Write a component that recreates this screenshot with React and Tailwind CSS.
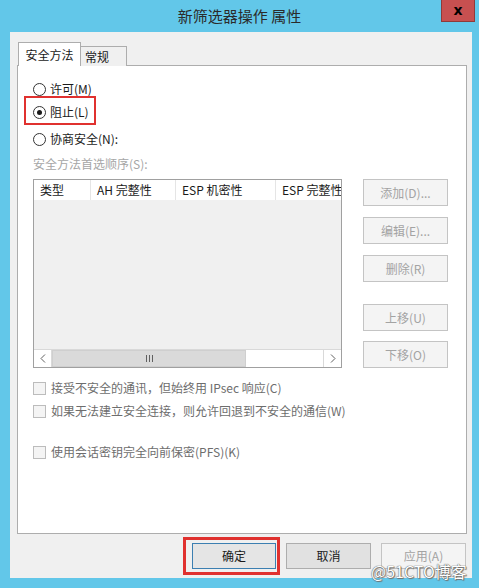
import React from 'react';

const font = { fontFamily: '"Noto Sans CJK SC", "Noto Sans", sans-serif' };

const Radio = ({ checked, label }) => (
  <div className="flex items-center h-[16px] gap-[4px]">
    <span className="w-[13px] h-[13px] rounded-full border border-[#333] bg-white flex items-center justify-center">
      {checked && <span className="w-[5px] h-[5px] rounded-full bg-[#1a1a1a]" />}
    </span>
    <span className="text-[12px] text-[#1a1a1a] leading-[16px]">{label}</span>
  </div>
);

const Check = ({ label }) => (
  <div className="flex items-center h-[16px] gap-[5px]">
    <span className="w-[13px] h-[13px] border border-[#bcbcbc] bg-[#f4f4f4]" />
    <span className="text-[12px] text-[#6d6d6d] leading-[16px] whitespace-nowrap">{label}</span>
  </div>
);

const SideButton = ({ label, className = '' }) => (
  <div className={`w-[85px] h-[27px] border border-[#c4c4c4] bg-[#f4f4f4] flex items-center justify-center text-[12px] text-[#a3a3a3] ${className}`}>
    {label}
  </div>
);

const App = () => {
  return (
    <div className="w-[479px] h-[588px] bg-[#62c7e9] flex flex-col relative overflow-hidden" style={font}>
      {/* title bar */}
      <div className="h-[32px] relative flex items-center justify-center">
        <span className="text-[15px] text-[#2b2b2b] mt-[1px]">新筛选器操作 属性</span>
        <div className="absolute left-[441px] top-0 w-[34px] h-[22px] bg-[#c75050] border border-[#8f3a3a] border-t-0 flex items-center justify-center">
          <span className="text-[14px] font-bold text-black leading-none mb-[2px]" style={{ fontFamily: '"DejaVu Sans", sans-serif' }}>x</span>
        </div>
      </div>

      {/* body */}
      <div className="ml-[10px] mr-[7px] mb-[10px] flex-1 bg-[#f0f0f0] pt-[10px] pl-[7px] pr-[5px] flex flex-col">
        {/* tabs */}
        <div className="flex items-end h-[24px] relative z-10">
          <div className="h-[24px] w-[63px] bg-white border border-[#adadad] border-b-0 flex items-center justify-center text-[12px] text-[#1a1a1a] ml-[1px]">安全方法</div>
          <div className="h-[20px] w-[46px] bg-[#f0f0f0] border border-[#adadad] border-l-0 border-b-0 flex items-center pl-[4px] text-[12px] text-[#1a1a1a]">常规</div>
        </div>

        {/* panel */}
        <div className="h-[469px] -mt-[1px] bg-white border border-[#adadad] pl-[15px] pt-[15px] flex flex-col">
          <Radio label="许可(M)" />
          <div className="relative mt-[7px]">
            <Radio checked label="阻止(L)" />
            <div className="absolute -left-[9px] -top-[8px] w-[72px] h-[29px] border-2 border-[#e0312f]" />
          </div>
          <div className="mt-[11px]">
            <Radio label="协商安全(N):" />
          </div>
          <div className="mt-[9px] h-[16px] text-[12px] text-[#a6a6a6] leading-[16px]">安全方法首选顺序(S):</div>

          <div className="flex mt-[7px]">
            {/* list */}
            <div className="w-[309px] h-[189px] border border-[#a0a0a0] bg-[#f0f0f0] flex flex-col">
              <div className="h-[20px] bg-white flex text-[12px] text-[#1a1a1a] leading-[20px] overflow-hidden whitespace-nowrap">
                <div className="w-[57px] pl-[6px] border-r border-[#e5e5e5] shrink-0">类型</div>
                <div className="w-[85px] pl-[6px] border-r border-[#e5e5e5] shrink-0">AH 完整性</div>
                <div className="w-[100px] pl-[6px] border-r border-[#e5e5e5] shrink-0">ESP 机密性</div>
                <div className="pl-[6px] shrink-0">ESP 完整性</div>
              </div>
              <div className="flex-1" />
              <div className="h-[18px] flex border-t border-[#d9d9d9] bg-white">
                <div className="w-[18px] flex items-center justify-center border-r border-[#d9d9d9]">
                  <svg width="6" height="9" viewBox="0 0 6 9"><path d="M5 0.5 L1 4.5 L5 8.5" fill="none" stroke="#606060" strokeWidth="1" /></svg>
                </div>
                <div className="w-[194px] bg-[#dadada] border border-[#cfcfcf] flex items-center justify-center gap-[2px]">
                  <span className="w-[1px] h-[7px] bg-[#606060]" />
                  <span className="w-[1px] h-[7px] bg-[#606060]" />
                  <span className="w-[1px] h-[7px] bg-[#606060]" />
                </div>
                <div className="flex-1" />
                <div className="w-[18px] flex items-center justify-center border-l border-[#d9d9d9]">
                  <svg width="6" height="9" viewBox="0 0 6 9"><path d="M1 0.5 L5 4.5 L1 8.5" fill="none" stroke="#606060" strokeWidth="1" /></svg>
                </div>
              </div>
            </div>

            {/* side buttons */}
            <div className="ml-[21px] flex flex-col">
              <SideButton label="添加(D)..." />
              <SideButton label="编辑(E)..." className="mt-[11px]" />
              <SideButton label="删除(R)" className="mt-[11px]" />
              <SideButton label="上移(U)" className="mt-[22px]" />
              <SideButton label="下移(O)" className="mt-[10px]" />
            </div>
          </div>

          <div className="mt-[12px]">
            <Check label="接受不安全的通讯，但始终用 IPsec 响应(C)" />
          </div>
          <div className="mt-[7px]">
            <Check label="如果无法建立安全连接，则允许回退到不安全的通信(W)" />
          </div>
          <div className="mt-[25px]">
            <Check label="使用会话密钥完全向前保密(PFS)(K)" />
          </div>
        </div>

        {/* bottom buttons */}
        <div className="flex justify-end mt-[9px] gap-[10px] pr-[1px]">
          <div className="relative">
            <div className="w-[84px] h-[26px] border border-[#3c7fb1] bg-[#e5e5e5] flex items-center justify-center text-[12px] text-[#1a1a1a]">确定</div>
            <div className="absolute -left-[9px] -top-[6px] w-[97px] h-[38px] border-[3px] border-[#e0312f]" />
          </div>
          <div className="w-[85px] h-[26px] border border-[#adadad] bg-[#e1e1e1] flex items-center justify-center text-[12px] text-[#1a1a1a]">取消</div>
          <div className="w-[85px] h-[26px] border border-[#c4c4c4] bg-[#f4f4f4] flex items-center justify-center text-[12px] text-[#a3a3a3]">应用(A)</div>
        </div>
      </div>

      {/* watermark */}
      <div
        className="absolute left-[371px] top-[561px] text-[16px] text-white leading-[20px] whitespace-nowrap"
        style={{ textShadow: '0 0 1px #555, 0 0 1px #555, 1px 1px 1px #777' }}
      >
        @51CTO博客
      </div>
    </div>
  );
};

export default App;
